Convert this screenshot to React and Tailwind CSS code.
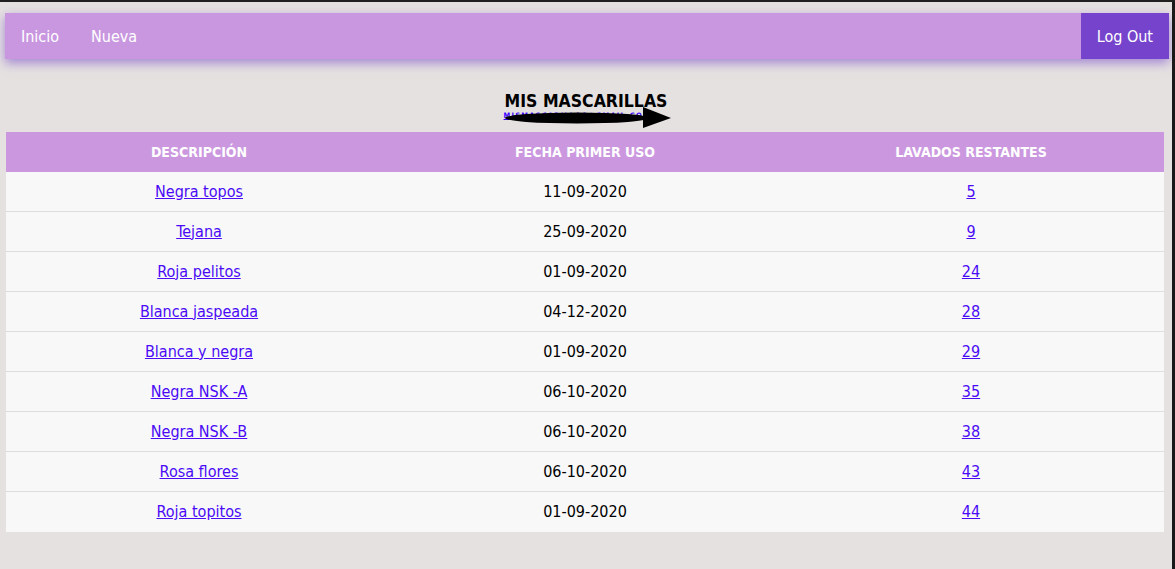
import React from "react";

const rows = [
  ["Negra topos", "11-09-2020", "5"],
  ["Tejana", "25-09-2020", "9"],
  ["Roja pelitos", "01-09-2020", "24"],
  ["Blanca jaspeada", "04-12-2020", "28"],
  ["Blanca y negra", "01-09-2020", "29"],
  ["Negra NSK -A", "06-10-2020", "35"],
  ["Negra NSK -B", "06-10-2020", "38"],
  ["Rosa flores", "06-10-2020", "43"],
  ["Roja topitos", "01-09-2020", "44"],
];

const font = { fontFamily: '"DejaVu Sans Condensed", "DejaVu Sans", Tahoma, sans-serif' };

export default function App() {
  return (
    <div className="h-[569px] w-[1175px] overflow-hidden bg-[#e5e1e0] flex flex-col" style={font}>
      <div className="h-[2px] bg-[#202020] shrink-0" />
      <div className="flex flex-1 min-h-0">
        <div className="flex-1 flex flex-col">
          <nav className="mt-[11px] ml-[5px] mr-[3px] h-[46px] flex items-stretch bg-[#c997df] shadow-[0_4px_10px_rgba(110,60,200,0.55)]">
            <a className="flex items-center pt-[2px] pl-4 pr-4 text-white text-[16px]">Inicio</a>
            <a className="flex items-center pt-[2px] px-4 text-white text-[16px]">Nueva</a>
            <div className="flex-1" />
            <a className="flex items-center pt-[2px] px-4 bg-[#7644cc] text-white text-[16px]">Log Out</a>
          </nav>
          <div className="mt-[32px] flex justify-center">
            <div className="relative">
              <h1 className="text-[17.5px] font-bold text-black leading-[20px]">MIS MASCARILLAS</h1>
              <div className="absolute left-[-1px] top-[21px] text-[7.5px] font-bold leading-[8px] tracking-[1.2px] text-[#3a00ff] whitespace-nowrap underline">
                MISMASCARILLAS@GMAIL.COM
              </div>
              <svg className="absolute left-0 top-[14px]" width="168" height="24" viewBox="0 0 168 24">
                <ellipse cx="72" cy="13" rx="72" ry="5.5" fill="#000" />
                <polygon points="138,2 166,13 138,23" fill="#000" />
              </svg>
            </div>
          </div>
          <div className="mt-[21px] ml-[6px] mr-[8px] bg-[#f8f8f8]">
            <div className="grid grid-cols-3 h-[40px] bg-[#cb98e0] text-white font-bold text-[14px] items-center text-center">
              <div>DESCRIPCIÓN</div>
              <div>FECHA PRIMER USO</div>
              <div>LAVADOS RESTANTES</div>
            </div>
            {rows.map((r, i) => (
              <div
                key={i}
                className={
                  "grid grid-cols-3 h-[40px] items-center text-center text-[16px] " +
                  (i < rows.length - 1 ? "border-b border-[#dddddd]" : "")
                }
              >
                <div><a className="text-[#4a0af5] underline">{r[0]}</a></div>
                <div className="text-black">{r[1]}</div>
                <div><a className="text-[#4a0af5] underline">{r[2]}</a></div>
              </div>
            ))}
          </div>
        </div>
        <div className="w-[3px] bg-[#1a1a1a] shrink-0" />
      </div>
    </div>
  );
}
